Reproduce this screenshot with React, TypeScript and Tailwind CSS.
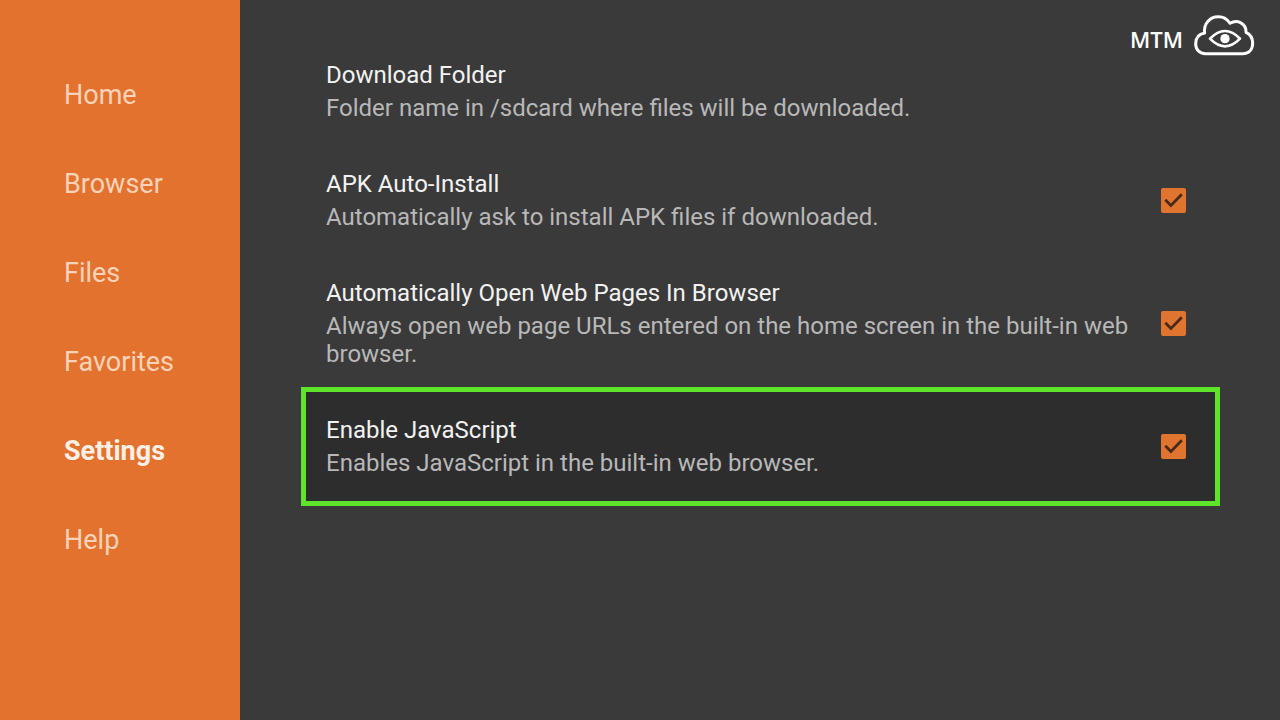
const NAV_ITEMS = ["Home", "Browser", "Files", "Favorites", "Settings", "Help"];

const SETTINGS = [
  {
    id: "download-folder",
    title: "Download Folder",
    description: "Folder name in /sdcard where files will be downloaded.",
    toggle: false,
  },
  {
    id: "apk-auto-install",
    title: "APK Auto-Install",
    description: "Automatically ask to install APK files if downloaded.",
    toggle: true,
  },
  {
    id: "open-web-pages",
    title: "Automatically Open Web Pages In Browser",
    description:
      "Always open web page URLs entered on the home screen in the built-in web browser.",
    toggle: true,
  },
  {
    id: "enable-javascript",
    title: "Enable JavaScript",
    description: "Enables JavaScript in the built-in web browser.",
    toggle: true,
  },
];

const FOCUSED = "enable-javascript";

function Sidebar() {
  return (
    <nav className="w-60 shrink-0 bg-[#e3722f] pt-[51px]">
      <ul>
        {NAV_ITEMS.map((item) => (
          <li key={item}>
            <a
              href={`#${item.toLowerCase()}`}
              className={`flex h-[89px] items-center pl-16 text-[27px] ${
                item === "Settings"
                  ? "font-bold text-[#fff0e6]"
                  : "text-[#f9d2b8]"
              }`}
            >
              {item}
            </a>
          </li>
        ))}
      </ul>
    </nav>
  );
}

function Toggle({ id }: { id: string }) {
  return (
    <span className="grid size-[25px] shrink-0 place-items-center">
      <input
        id={id}
        type="checkbox"
        defaultChecked
        className="peer col-start-1 row-start-1 size-[25px] appearance-none rounded-xs border-2 border-[#e0752f] checked:bg-[#e0752f]"
      />
      <svg
        viewBox="0 0 25 25"
        fill="none"
        className="pointer-events-none invisible col-start-1 row-start-1 size-[25px] peer-checked:visible"
      >
        <path d="M4.3 11.8l5.6 5.6L20.8 6.3" stroke="#4a2a18" strokeWidth="2.8" />
      </svg>
    </span>
  );
}

function Logo() {
  return (
    <div className="absolute right-[25px] top-[14px] flex items-center gap-2.5 text-white">
      <span className="pt-2 font-['Open_Sans'] text-[22px] font-semibold leading-7">
        MTM
      </span>
      <svg width="62" height="42" viewBox="219 27 186 126" fill="none">
        <path
          d="M256 146C238 146 227 133 227 116C227 99 237 87 254 84C250 57 269 35 295 35C310 35 322 42 330 55C352 42 379 55 378 82C391 88 398 100 398 114C398 133 387 146 369 146Z"
          stroke="currentColor"
          strokeWidth="9"
          strokeLinejoin="round"
        />
        <path
          d="M270 101Q315 55 360 101Q315 147 270 101Z"
          stroke="currentColor"
          strokeWidth="8"
          strokeLinejoin="round"
        />
        <circle cx="315" cy="101" r="14" fill="currentColor" />
      </svg>
    </div>
  );
}

export default function App() {
  return (
    <div className="relative flex min-h-screen bg-[#3a3a3a] font-['Roboto',sans-serif]">
      <Sidebar />
      <main className="flex-1 pl-[66px] pr-[65px] pt-[37px]">
        {SETTINGS.map((s) => (
          <div
            key={s.id}
            className={`flex items-center gap-5 py-6 pl-5 pr-[29px] ${
              s.id === FOCUSED ? "bg-[#2d2d2e] ring-5 ring-[#5ee52b]" : ""
            }`}
          >
            <label
              htmlFor={s.toggle ? s.id : undefined}
              className="flex flex-1 flex-col gap-[5px] text-2xl leading-7"
            >
              <span className="text-[#f2f2f2]">{s.title}</span>
              <span className="text-[#b8b8b8]">{s.description}</span>
            </label>
            {s.toggle && <Toggle id={s.id} />}
          </div>
        ))}
      </main>
      <Logo />
    </div>
  );
}
